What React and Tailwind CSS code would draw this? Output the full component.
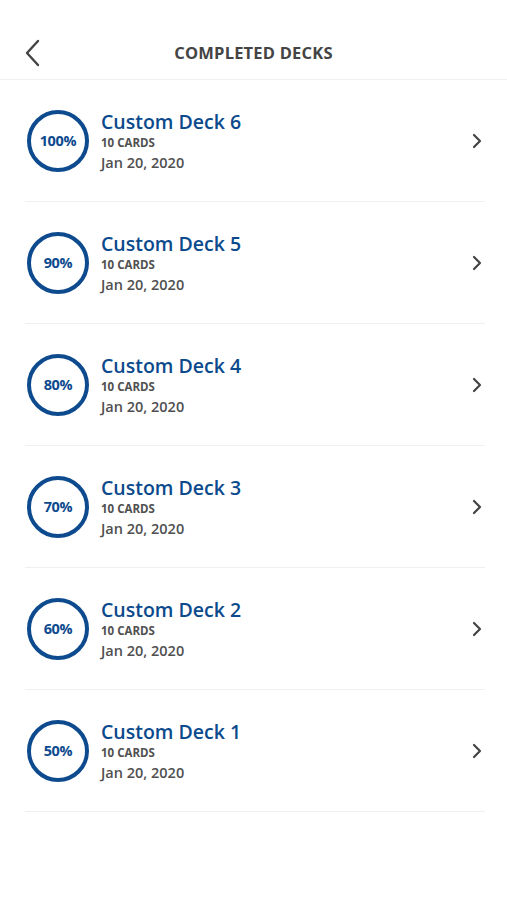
const decks = [
  { name: 'Custom Deck 6', percent: '100%' },
  { name: 'Custom Deck 5', percent: '90%' },
  { name: 'Custom Deck 4', percent: '80%' },
  { name: 'Custom Deck 3', percent: '70%' },
  { name: 'Custom Deck 2', percent: '60%' },
  { name: 'Custom Deck 1', percent: '50%' },
];

function DeckRow({ deck }) {
  return (
    <div className="h-[122px] flex items-center border-b border-[#f0f0f0] pl-[2px]">
      <div className="w-[62px] h-[62px] rounded-full border-[4px] border-[#0d4a8e] flex items-center justify-center shrink-0">
        <span className="text-[14.5px] font-bold text-[#0d4a8e] tracking-[-0.3px]">{deck.percent}</span>
      </div>
      <div className="ml-[12px] flex-1 flex flex-col mt-[1px]">
        <div className="text-[19.5px] leading-[25px] text-[#0b4a8c] font-semibold">{deck.name}</div>
        <div className="text-[11.5px] leading-[18px] font-bold text-[#505050]">10 CARDS</div>
        <div className="text-[14.5px] leading-[21px] font-semibold text-[#505050]">Jan 20, 2020</div>
      </div>
      <svg width="12" height="16" viewBox="0 0 12 16" className="mr-[2px]">
        <polyline points="3,2 9,8 3,14" fill="none" stroke="#444" strokeWidth="2.2" strokeLinecap="round" strokeLinejoin="round" />
      </svg>
    </div>
  );
}

export default function App() {
  return (
    <div className="w-[507px] min-h-[900px] bg-white" style={{ fontFamily: '"Open Sans", sans-serif' }}>
      <div className="h-[80px] flex items-center pt-[26px] border-b border-[#f0f0f0]">
        <div className="pl-[24px] w-[60px] flex items-center">
          <svg width="18" height="28" viewBox="0 0 18 28">
            <polyline points="14,2 3,14 14,26" fill="none" stroke="#444" strokeWidth="2.4" strokeLinecap="round" strokeLinejoin="round" />
          </svg>
        </div>
        <div className="flex-1 text-center text-[16.5px] font-bold text-[#444] leading-[30px] pr-[60px] tracking-[0.2px]">
          COMPLETED DECKS
        </div>
      </div>
      <div className="pl-[25px] pr-[22px]">
        {decks.map((deck) => (
          <DeckRow key={deck.name} deck={deck} />
        ))}
      </div>
    </div>
  );
}
